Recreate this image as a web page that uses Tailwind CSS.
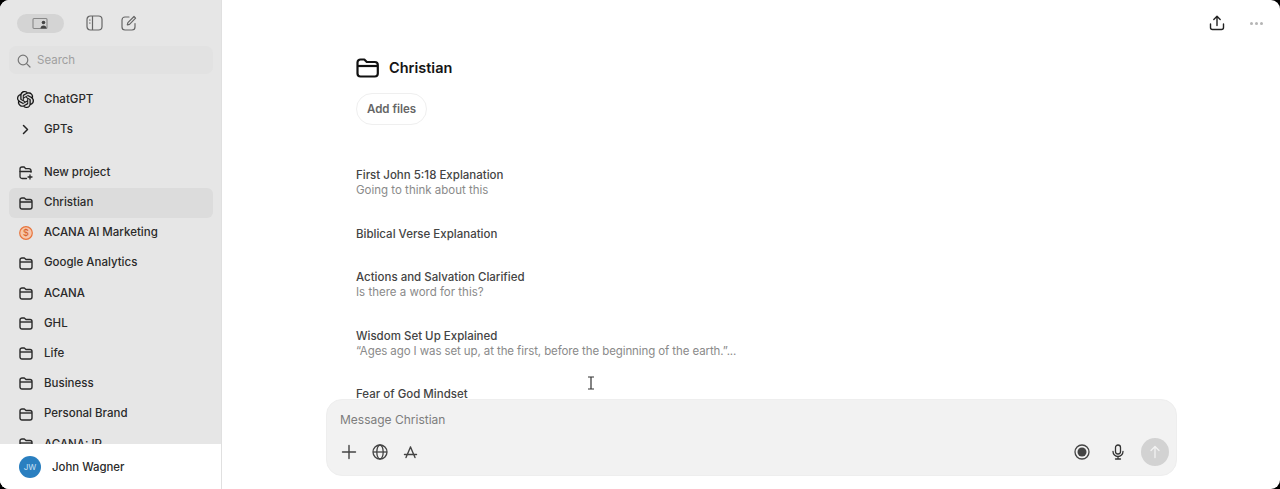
<!DOCTYPE html>
<html lang="en">
<head>
<meta charset="utf-8">
<script src="https://cdn.jsdelivr.net/npm/@tailwindcss/browser@4"></script>
<title>Christian</title>
</head>
<body class="bg-black overflow-hidden font-['Inter','Liberation_Sans',sans-serif]">
<div class="flex h-[489px] w-[1280px] overflow-hidden rounded-[9px] bg-white text-[#2a2a2a]">
  <!-- Sidebar -->
  <aside class="flex h-full w-[222px] shrink-0 flex-col bg-[#e6e6e6] border-r border-[#e0e0e0]">
    <div class="flex-1 overflow-hidden">
      <div class="flex h-[46px] items-center pl-[17px]">
        <div class="flex h-[19px] w-[47px] items-center justify-center rounded-full bg-[#d4d4d4]">
          <svg width="17" height="13" viewBox="0 0 17 13" fill="none"><rect x="1" y="1.500" width="14" height="10" rx="1" stroke="#888" stroke-width="1.100"/><circle cx="11.500" cy="5.500" r="1.800" fill="#444"/><path d="M8.500 11.500c0-2 1.300-3 3-3s3 1 3 3z" fill="#444"/></svg>
        </div>
        <svg class="ml-[22px]" width="17" height="16" viewBox="0 0 17 16" fill="none" stroke="#666" stroke-width="1.200"><rect x="1" y="1" width="15" height="14" rx="3.500"/><path d="M6.500 1v14"/><path d="M3.500 5h.6M3.500 8h.6" stroke-linecap="round"/></svg>
        <svg class="ml-[18px]" width="16" height="16" viewBox="0 0 16 16" fill="none" stroke="#666" stroke-width="1.200" stroke-linecap="round" stroke-linejoin="round"><path d="M8 2H4a3 3 0 0 0-3 3v7a3 3 0 0 0 3 3h7a3 3 0 0 0 3-3V8.500"/><path d="M13 1.500l1.600 1.600L8.500 9.300l-2.200.6.6-2.300z"/></svg>
      </div>
      <div class="mx-[9px] flex h-[28px] w-[204px] items-center rounded-[7px] bg-[#e2e2e2] pl-[8px] pt-[1px] text-[11.500px] text-[#a0a0a0]">
        <svg width="14" height="14" viewBox="0 0 14 14" fill="none" stroke="#777" stroke-width="1.200" stroke-linecap="round"><circle cx="6" cy="6" r="4.800"/><path d="M9.600 9.600l3.400 3.400"/></svg>
        <span class="ml-[6px]">Search</span>
      </div>
      <div class="mt-[10.500px] text-[11.500px] font-medium">
        <div class="flex h-[30px] items-center pl-[17px]">
          <svg class="mr-[10px] shrink-0" width="17" height="17" viewBox="0 0 24 24" fill="#111" stroke="#111" stroke-width="0.300"><path d="M22.2819 9.8211a5.9847 5.9847 0 0 0-.5157-4.9108 6.0462 6.0462 0 0 0-6.5098-2.9A6.0651 6.0651 0 0 0 4.9807 4.1818a5.9847 5.9847 0 0 0-3.9977 2.9 6.0462 6.0462 0 0 0 .7427 7.0966 5.98 5.98 0 0 0 .511 4.9107 6.051 6.051 0 0 0 6.5146 2.9001A5.9847 5.9847 0 0 0 13.2599 24a6.0557 6.0557 0 0 0 5.7718-4.2058 5.9894 5.9894 0 0 0 3.9977-2.9001 6.0557 6.0557 0 0 0-.7475-7.0729zm-9.022 12.6081a4.4755 4.4755 0 0 1-2.8764-1.0408l.1419-.0804 4.7783-2.7582a.7948.7948 0 0 0 .3927-.6813v-6.7369l2.02 1.1686a.071.071 0 0 1 .038.052v5.5826a4.504 4.504 0 0 1-4.4945 4.4944zm-9.6607-4.1254a4.4708 4.4708 0 0 1-.5346-3.0137l.142.0852 4.783 2.7582a.7712.7712 0 0 0 .7806 0l5.8428-3.3685v2.3324a.0804.0804 0 0 1-.0332.0615L9.74 19.9502a4.4992 4.4992 0 0 1-6.1408-1.6464zM2.3408 7.8956a4.485 4.485 0 0 1 2.3655-1.9728V11.6a.7664.7664 0 0 0 .3879.6765l5.8144 3.3543-2.0201 1.1685a.0757.0757 0 0 1-.071 0l-4.8303-2.7865A4.504 4.504 0 0 1 2.3408 7.872zm16.5963 3.8558L13.1038 8.364 15.1192 7.2a.0757.0757 0 0 1 .071 0l4.8303 2.7913a4.4944 4.4944 0 0 1-.6765 8.1042v-5.6772a.79.79 0 0 0-.407-.667zm2.0107-3.0231l-.142-.0852-4.7735-2.7818a.7759.7759 0 0 0-.7854 0L9.409 9.2297V6.8974a.0662.0662 0 0 1 .0284-.0615l4.8303-2.7866a4.4992 4.4992 0 0 1 6.6802 4.66zM8.3065 12.863l-2.02-1.1638a.0804.0804 0 0 1-.038-.0567V6.0742a4.4992 4.4992 0 0 1 7.3757-3.4537l-.142.0805L8.704 5.459a.7948.7948 0 0 0-.3927.6813zm1.0976-2.3654l2.602-1.4998 2.6069 1.4998v2.9994l-2.5974 1.4997-2.6067-1.4997Z"/></svg>
          <span>ChatGPT</span>
        </div>
        <div class="flex h-[30px] items-center pl-[17px]">
          <svg class="mr-[10px] shrink-0" width="17" height="17" viewBox="0 0 17 17" fill="none" stroke="#222" stroke-width="1.500" stroke-linecap="round" stroke-linejoin="round"><path d="M6.500 4.500l4 4-4 4"/></svg>
          <span>GPTs</span>
        </div>
      </div>
      <div class="mt-[13px] text-[11.500px] font-medium">
        <div class="flex h-[30px] items-center pl-[19px]">
          <svg class="mr-[11px] shrink-0" width="14" height="14" viewBox="0 0 14 14" fill="none" stroke="#2a2a2a" stroke-width="1.300" stroke-linecap="round" stroke-linejoin="round"><path d="M7.500 12.500H3a2 2 0 0 1-2-2V3a2 2 0 0 1 2-2h2.200l1.500 1.700H10a2 2 0 0 1 2 2v1.500"/><path d="M1 5.500h11"/><path d="M11 9v4M9 11h4"/></svg>
          <span>New project</span>
        </div>
        <div class="mx-[9px] flex h-[30px] w-[204px] items-center rounded-[6px] bg-[#dcdcdc] pl-[10px] pt-[1px]">
          <svg class="mr-[11px] shrink-0" width="14" height="13" viewBox="0 0 14 13" fill="none" stroke="#2a2a2a" stroke-width="1.400" stroke-linejoin="round"><path d="M1 4V3a2 2 0 0 1 2-2h2.300L7 2.500h4a2 2 0 0 1 2 2V10a2 2 0 0 1-2 2H3a2 2 0 0 1-2-2z"/><path d="M1 5h12"/></svg>
          <span>Christian</span>
        </div>
        <div class="flex h-[30px] items-center pl-[19px] pt-[1px]">
          <svg class="mr-[11px] shrink-0" width="14" height="14" viewBox="0 0 14 14" fill="none"><circle cx="7" cy="7" r="6.300" fill="#f6c6ab" stroke="#e8743b" stroke-width="1.200"/><text x="7" y="10.200" text-anchor="middle" font-size="9" font-weight="500" fill="#d9642b" font-family="Inter, sans-serif">$</text></svg>
          <span>ACANA AI Marketing</span>
        </div>
        <div class="flex h-[30.200px] items-center pl-[19px] pt-[1px]">
          <svg class="mr-[11px] shrink-0" width="14" height="13" viewBox="0 0 14 13" fill="none" stroke="#2a2a2a" stroke-width="1.400" stroke-linejoin="round"><path d="M1 4V3a2 2 0 0 1 2-2h2.300L7 2.500h4a2 2 0 0 1 2 2V10a2 2 0 0 1-2 2H3a2 2 0 0 1-2-2z"/><path d="M1 5h12"/></svg>
          <span>Google Analytics</span>
        </div>
        <div class="flex h-[30.200px] items-center pl-[19px] pt-[1px]">
          <svg class="mr-[11px] shrink-0" width="14" height="13" viewBox="0 0 14 13" fill="none" stroke="#2a2a2a" stroke-width="1.400" stroke-linejoin="round"><path d="M1 4V3a2 2 0 0 1 2-2h2.300L7 2.500h4a2 2 0 0 1 2 2V10a2 2 0 0 1-2 2H3a2 2 0 0 1-2-2z"/><path d="M1 5h12"/></svg>
          <span>ACANA</span>
        </div>
        <div class="flex h-[30.200px] items-center pl-[19px] pt-[1px]">
          <svg class="mr-[11px] shrink-0" width="14" height="13" viewBox="0 0 14 13" fill="none" stroke="#2a2a2a" stroke-width="1.400" stroke-linejoin="round"><path d="M1 4V3a2 2 0 0 1 2-2h2.300L7 2.500h4a2 2 0 0 1 2 2V10a2 2 0 0 1-2 2H3a2 2 0 0 1-2-2z"/><path d="M1 5h12"/></svg>
          <span>GHL</span>
        </div>
        <div class="flex h-[30.200px] items-center pl-[19px] pt-[1px]">
          <svg class="mr-[11px] shrink-0" width="14" height="13" viewBox="0 0 14 13" fill="none" stroke="#2a2a2a" stroke-width="1.400" stroke-linejoin="round"><path d="M1 4V3a2 2 0 0 1 2-2h2.300L7 2.500h4a2 2 0 0 1 2 2V10a2 2 0 0 1-2 2H3a2 2 0 0 1-2-2z"/><path d="M1 5h12"/></svg>
          <span>Life</span>
        </div>
        <div class="flex h-[30.200px] items-center pl-[19px] pt-[1px]">
          <svg class="mr-[11px] shrink-0" width="14" height="13" viewBox="0 0 14 13" fill="none" stroke="#2a2a2a" stroke-width="1.400" stroke-linejoin="round"><path d="M1 4V3a2 2 0 0 1 2-2h2.300L7 2.500h4a2 2 0 0 1 2 2V10a2 2 0 0 1-2 2H3a2 2 0 0 1-2-2z"/><path d="M1 5h12"/></svg>
          <span>Business</span>
        </div>
        <div class="flex h-[30.200px] items-center pl-[19px] pt-[1px]">
          <svg class="mr-[11px] shrink-0" width="14" height="13" viewBox="0 0 14 13" fill="none" stroke="#2a2a2a" stroke-width="1.400" stroke-linejoin="round"><path d="M1 4V3a2 2 0 0 1 2-2h2.300L7 2.500h4a2 2 0 0 1 2 2V10a2 2 0 0 1-2 2H3a2 2 0 0 1-2-2z"/><path d="M1 5h12"/></svg>
          <span>Personal Brand</span>
        </div>
        <div class="flex h-[30.200px] items-center pl-[19px] pt-[1px]">
          <svg class="mr-[11px] shrink-0" width="14" height="13" viewBox="0 0 14 13" fill="none" stroke="#2a2a2a" stroke-width="1.400" stroke-linejoin="round"><path d="M1 4V3a2 2 0 0 1 2-2h2.300L7 2.500h4a2 2 0 0 1 2 2V10a2 2 0 0 1-2 2H3a2 2 0 0 1-2-2z"/><path d="M1 5h12"/></svg>
          <span>ACANA: IP</span>
        </div>
      </div>
    </div>
    <div class="flex h-[45px] shrink-0 items-center bg-white pl-[19px] pt-[1px]">
      <div class="flex h-[22px] w-[22px] items-center justify-center rounded-full bg-[#2a7fc0] text-[8px] font-medium text-[#b9d8ee]">JW</div>
      <span class="ml-[11px] pt-[2px] text-[11.400px] font-medium">John Wagner</span>
    </div>
  </aside>
  <!-- Main -->
  <main class="flex h-full min-w-0 flex-1 flex-col">
    <div class="flex h-[46px] shrink-0 items-center justify-end pr-[17px]">
      <svg width="16" height="16" viewBox="0 0 16 16" fill="none" stroke="#222" stroke-width="1.400" stroke-linecap="round" stroke-linejoin="round"><path d="M8 10.500V1.500M4.800 4.500L8 1.300l3.200 3.200"/><path d="M1.500 9v3.500a2 2 0 0 0 2 2h9a2 2 0 0 0 2-2V9"/></svg>
      <div class="ml-[25px] flex gap-[2px]">
        <span class="h-[3px] w-[3px] rounded-full bg-[#b5b5b5]"></span>
        <span class="h-[3px] w-[3px] rounded-full bg-[#b5b5b5]"></span>
        <span class="h-[3px] w-[3px] rounded-full bg-[#b5b5b5]"></span>
      </div>
    </div>
    <div class="min-h-0 flex-1 overflow-hidden pl-[134px]">
      <div class="flex h-[44px] items-center">
        <svg width="23" height="20" viewBox="0 0 23 20" fill="none" stroke="#111" stroke-width="2.200" stroke-linejoin="round"><path d="M1.500 6V4.500a3 3 0 0 1 3-3h3.800l2.500 2.500h8a3 3 0 0 1 3 3V15.500a3 3 0 0 1-3 3h-14.300a3 3 0 0 1-3-3z"/><path d="M1.500 8h20"/></svg>
        <h1 class="ml-[10px] text-[14.500px] font-semibold text-[#151515]">Christian</h1>
      </div>
      <button class="mt-[3px] flex h-[32px] w-[71px] items-center justify-center rounded-full border border-[#efefef] pt-[2px] text-[11.500px] font-semibold text-[#666]">Add files</button>
      <ul class="mt-[43px] text-[11.500px]">
        <li class="h-[58px]">
          <p class="font-medium leading-[15px] text-[#444]">First John 5:18 Explanation</p>
          <p class="leading-[15px] text-[#8a8a8a]">Going to think about this</p>
        </li>
        <li class="h-[44px] pt-[1px]">
          <p class="font-medium leading-[15px] text-[#444]">Biblical Verse Explanation</p>
        </li>
        <li class="h-[58.500px]">
          <p class="font-medium leading-[15px] text-[#444]">Actions and Salvation Clarified</p>
          <p class="leading-[15px] text-[#8a8a8a]">Is there a word for this?</p>
        </li>
        <li class="h-[58px]">
          <p class="font-medium leading-[15px] text-[#444]">Wisdom Set Up Explained</p>
          <p class="leading-[15px] tracking-[-0.1px] text-[#8a8a8a]">“Ages ago I was set up, at the first, before the beginning of the earth.”...</p>
        </li>
        <li>
          <p class="font-medium leading-[15px] text-[#444]">Fear of God Mindset</p>
        </li>
      </ul>
    </div>
    <div class="mb-[13px] ml-[104px] h-[77px] w-[851px] shrink-0 rounded-[16px] border border-[#eeeeee] bg-[#f2f2f2] pl-[13px] pr-[7px]">
      <div class="pt-[12px] text-[12px] leading-[16px] text-[#7d7d7d]">Message Christian</div>
      <div class="ml-[1px] mt-[10px] flex items-center">
        <svg width="16" height="16" viewBox="0 0 16 16" fill="none" stroke="#444" stroke-width="1.400" stroke-linecap="round"><path d="M8 1.500v13M1.500 8h13"/></svg>
        <svg class="ml-[14.500px]" width="16" height="16" viewBox="0 0 16 16" fill="none" stroke="#444" stroke-width="1.300"><circle cx="8" cy="8" r="7"/><ellipse cx="8" cy="8" rx="3.200" ry="7"/><path d="M1 8h14"/></svg>
        <svg class="ml-[15px]" width="15" height="14" viewBox="0 0 15 14" fill="none" stroke="#444" stroke-width="1.400" stroke-linecap="round"><path d="M7.500 2L3 12.500M7.500 2L12 12.500M1.500 9.500h12"/></svg>
        <div class="ml-auto flex items-center">
          <svg width="16" height="16" viewBox="0 0 16 16" fill="none"><circle cx="8" cy="8" r="7" stroke="#444" stroke-width="1.300"/><circle cx="8" cy="8" r="4.500" fill="#444"/></svg>
          <svg class="ml-[21px]" width="14" height="16" viewBox="0 0 14 16" fill="none" stroke="#333" stroke-width="1.300" stroke-linecap="round"><rect x="4.500" y="1" width="5" height="9" rx="2.500"/><path d="M2 7.500a5 5 0 0 0 10 0M7 12.500v2.500M4.500 15h5"/></svg>
          <div class="ml-[16px] flex h-[28px] w-[28px] items-center justify-center rounded-full bg-[#d2d2d2]">
            <svg width="12" height="14" viewBox="0 0 12 14" fill="none" stroke="#f2f2f2" stroke-width="1.300" stroke-linecap="round" stroke-linejoin="round"><path d="M6 12.500V2M2 5.500l4-4 4 4"/></svg>
          </div>
        </div>
      </div>
    </div>
  </main>
</div>
<svg class="absolute left-[587px] top-[376px]" width="8" height="14" viewBox="0 0 8 14" fill="none" stroke="#333" stroke-width="1.200"><path d="M1 1h6M1 13h6M4 1v12"/></svg>
</body>
</html>
